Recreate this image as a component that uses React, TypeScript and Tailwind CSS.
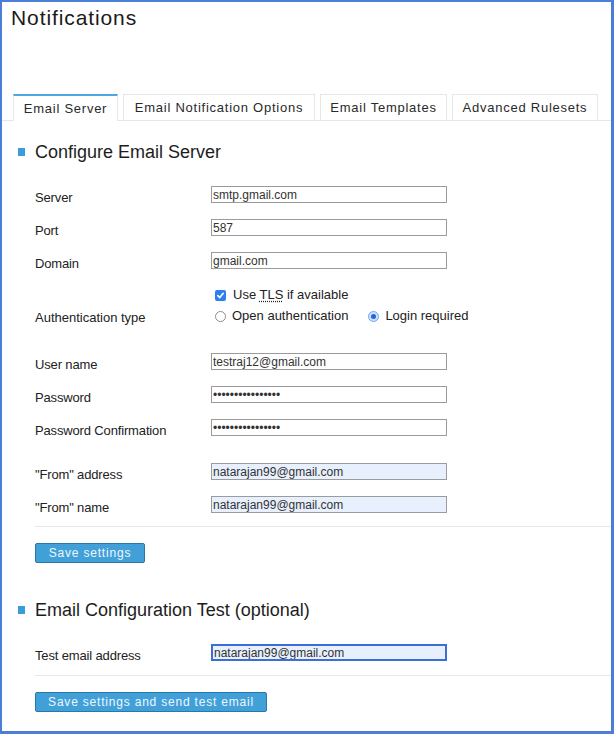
import React from "react";

const tabs = ["Email Server", "Email Notification Options", "Email Templates", "Advanced Rulesets"];
const tabWidths = ["w-[105px]", "w-[192px]", "w-[127px]", "w-[146px]"];

function Field({
  label,
  value,
  type = "text",
  autofill = false,
  focused = false,
}: {
  label: string;
  value: string;
  type?: string;
  autofill?: boolean;
  focused?: boolean;
}) {
  const base = "w-[236px] h-[17px] px-[1px] text-[12px] leading-[15px] text-[#333] outline-none font-['Liberation_Sans',Arial,sans-serif]";
  let look = "border border-[#9b9b9b] bg-white";
  if (autofill) look = "border border-[#9b9b9b] bg-[#e8f0fe]";
  if (focused) look = "border-2 border-[#3a6fd8] bg-[#e8f0fe] leading-[13px]";
  return (
    <div className="flex items-center h-[33px]">
      <label className="w-[176px] pt-[6px] text-[13px] tracking-[-0.15px] text-[#222]">{label}</label>
      <input type={type} defaultValue={value} readOnly className={`${base} ${look}`} />
    </div>
  );
}

function SectionHeading({ children }: { children: React.ReactNode }) {
  return (
    <div className="flex items-center h-[22px] pl-[16px]">
      <span className="w-[7px] h-[8px] bg-[#3c9bda]" />
      <h2 className="ml-[10px] text-[18px] leading-[22px] text-[#1d1d1d]">{children}</h2>
    </div>
  );
}

function Radio({ checked }: { checked?: boolean }) {
  if (checked)
    return (
      <span className="w-[11px] h-[11px] rounded-full bg-[#cfe1fb] border border-[#6ea6f1] flex items-center justify-center">
        <span className="w-[5px] h-[5px] rounded-full bg-[#2466d9]" />
      </span>
    );
  return <span className="w-[11px] h-[11px] rounded-full bg-white border border-[#8e8e8e]" />;
}

export default function App() {
  return (
    <div className="w-[614px] h-[734px] bg-white border-t-2 border-l-2 border-r-[3px] border-b-[3px] border-[#4b7ed4] font-['Liberation_Sans',Arial,sans-serif] text-[#222]">
      <h1 className="mt-[4px] pl-[9px] text-[21px] leading-[24px] tracking-[0.9px] text-[#1a1a1a]">Notifications</h1>

      <div className="mt-[64px] flex gap-[5px] pl-[11px] h-[27px] border-b border-[#e6e6e6]">
        {tabs.map((t, i) => (
          <div
            key={t}
            className={`${tabWidths[i]} h-[27px] flex items-center justify-center text-[13px] tracking-[0.75px] text-[#2a2a2a] border-x border-[#e6e6e6] ${
              i === 0 ? "border-t-2 border-t-[#4ea7e1] bg-white" : "border-t"
            }`}
          >
            {t}
          </div>
        ))}
      </div>

      <div className="mt-[20px]">
        <SectionHeading>Configure Email Server</SectionHeading>
      </div>

      <div className="mt-[15px] pl-[33px]">
        <Field label="Server" value="smtp.gmail.com" />
        <Field label="Port" value="587" />
        <Field label="Domain" value="gmail.com" />

        <div className="h-[68px] pt-[8px] flex">
          <div className="w-[176px] flex flex-col">
            <div className="h-[20px]" />
            <div className="h-[22px] flex items-center pt-[4px] text-[13px]">Authentication type</div>
          </div>
          <div className="flex flex-col pl-[4px] text-[13px]">
            <div className="h-[20px] flex items-center">
              <span className="w-[11px] h-[11px] rounded-[2px] bg-[#2f7ef1] flex items-center justify-center">
                <svg width="9" height="9" viewBox="0 0 10 10">
                  <path d="M2 5.2 L4.2 7.3 L8 2.6" fill="none" stroke="white" strokeWidth="1.8" strokeLinecap="round" strokeLinejoin="round" />
                </svg>
              </span>
              <span className="ml-[7px]">
                Use <abbr className="underline decoration-dotted underline-offset-[2px]">TLS</abbr> if available
              </span>
            </div>
            <div className="h-[22px] flex items-center">
              <Radio />
              <span className="ml-[6px]">Open authentication</span>
              <span className="ml-[20px] flex items-center">
                <Radio checked />
                <span className="ml-[6px]">Login required</span>
              </span>
            </div>
          </div>
        </div>

        <Field label="User name" value="testraj12@gmail.com" />
        <Field label="Password" value="password12345678" type="password" />
        <Field label="Password Confirmation" value="password12345678" type="password" />
        <div className="h-[11px]" />
        <Field label={'"From" address'} value="natarajan99@gmail.com" autofill />
        <Field label={'"From" name'} value="natarajan99@gmail.com" autofill />
      </div>

      <div className="mt-[5px] ml-[33px] border-t border-[#e8e8e8]" />
      <div className="pl-[33px] mt-[16px] flex">
        <button className="block w-[110px] h-[20px] rounded-[2px] bg-[#42a0d9] border border-[#2b78a8] text-[12px] leading-[18px] tracking-[0.8px] text-[#eef7fd]">
          Save settings
        </button>
      </div>

      <div className="mt-[36px]">
        <SectionHeading>Email Configuration Test (optional)</SectionHeading>
      </div>

      <div className="mt-[15px] pl-[33px]">
        <Field label="Test email address" value="natarajan99@gmail.com" focused />
      </div>
      <div className="mt-[6px] ml-[33px] border-t border-[#e8e8e8]" />
      <div className="pl-[33px] mt-[16px] flex">
        <button className="block w-[232px] h-[20px] rounded-[2px] bg-[#42a0d9] border border-[#2b78a8] text-[12px] leading-[18px] tracking-[0.8px] text-[#eef7fd]">
          Save settings and send test email
        </button>
      </div>
    </div>
  );
}
